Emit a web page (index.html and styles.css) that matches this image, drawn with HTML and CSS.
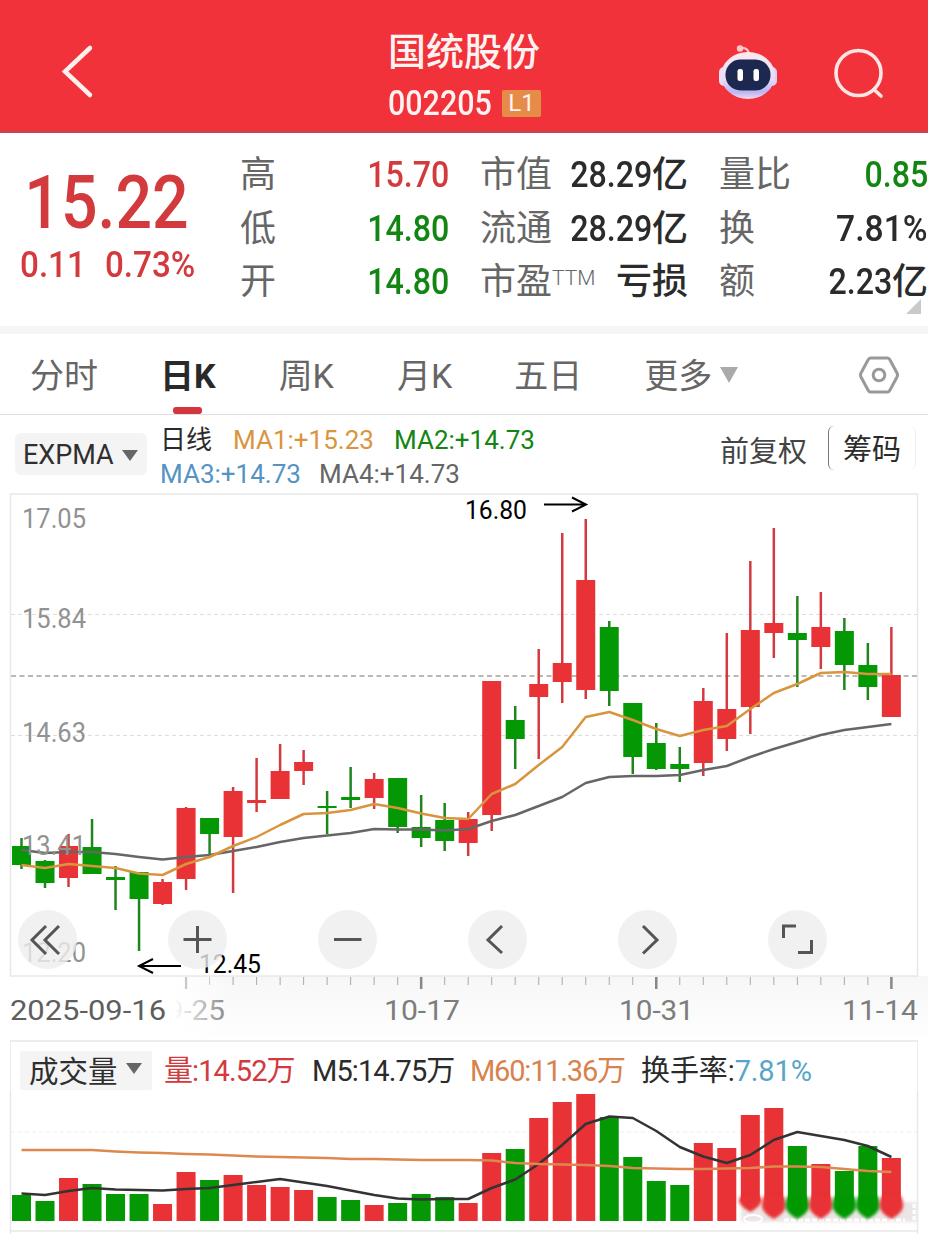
FILE: index.html
```html
<!DOCTYPE html>
<html lang="zh-CN">
<head>
    <meta charset="UTF-8">
    <meta name="viewport" content="width=device-width, initial-scale=1.0">
    <title>国统股份 002205</title>
    <link rel="stylesheet" href="styles.css">
</head>
<body>
    <!-- Header -->
    <header class="header">
        <svg class="back" viewBox="0 0 34 56"><path d="M30 5 L5 28.500 L30 52" fill="none" stroke="#fff0ee" stroke-width="4.500" stroke-linecap="round"/></svg>
        <div class="title">
            <h1 class="name">国统股份</h1>
            <div class="code-row">
                <span class="code">002205</span>
                <span class="level">L1</span>
            </div>
        </div>
        <div class="actions">
            <svg class="robot" viewBox="0 0 60 56">
                <defs>
                    <linearGradient id="shell" x1="0" y1="0" x2="0" y2="1">
                        <stop offset="0" stop-color="#ffe9ee"/>
                        <stop offset="0.6" stop-color="#e4dcfa"/>
                        <stop offset="0.85" stop-color="#b9b5f5"/>
                        <stop offset="1" stop-color="#f8d8e8"/>
                    </linearGradient>
                </defs>
                <path d="M22 4 Q30 3 31 10" fill="none" stroke="#ffc9cc" stroke-width="2"/>
                <circle cx="22" cy="4.500" r="3.200" fill="#ffc9cc"/>
                <rect x="1" y="23" width="10" height="19" rx="5" fill="#f2dcf2"/>
                <rect x="49" y="23" width="10" height="19" rx="5" fill="#dcd0f6"/>
                <ellipse cx="30" cy="31.500" rx="27" ry="23.500" fill="url(#shell)"/>
                <rect x="7.500" y="15.500" width="45" height="31" rx="15" fill="#1d2850"/>
                <rect x="19.500" y="25" width="5.500" height="12" rx="2.200" fill="#fff"/>
                <rect x="35.500" y="25" width="5.500" height="12" rx="2.200" fill="#fff"/>
            </svg>
            <svg class="search" viewBox="0 0 52 52"><g fill="none" stroke="#ffe6e4" stroke-width="3.600" stroke-linecap="round"><circle cx="25.500" cy="25" r="22.500"/><path d="M41 41.500 L48 48"/></g></svg>
        </div>
    </header>

    <!-- Quote -->
    <section class="quote">
        <div class="latest">
            <div class="price red">15.22</div>
            <div class="change red"><span>0.11</span><span>0.73%</span></div>
        </div>
        <dl class="stats stats-a">
            <dt>高</dt><dd class="red"><span class="num">15.70</span></dd>
            <dt>低</dt><dd class="green"><span class="num">14.80</span></dd>
            <dt>开</dt><dd class="green"><span class="num">14.80</span></dd>
        </dl>
        <dl class="stats stats-b">
            <dt>市值</dt><dd><span class="num">28.29</span>亿</dd>
            <dt>流通</dt><dd><span class="num">28.29</span>亿</dd>
            <dt>市盈<sup>TTM</sup></dt><dd>亏损</dd>
        </dl>
        <dl class="stats stats-c">
            <dt>量比</dt><dd class="green"><span class="num">0.85</span></dd>
            <dt>换</dt><dd><span class="num percent">7.81%</span></dd>
            <dt>额</dt><dd><span class="num">2.23</span>亿</dd>
        </dl>
        <i class="expand"></i>
    </section>

    <!-- Period tabs -->
    <nav class="tabs">
        <span class="tab">分时</span>
        <span class="tab active">日K</span>
        <span class="tab">周K</span>
        <span class="tab">月K</span>
        <span class="tab">五日</span>
        <span class="tab more">更多<i class="caret"></i></span>
        <svg class="settings" viewBox="0 0 40 38"><g fill="none" stroke="#999" stroke-width="3"><path d="M11.500 2 H28.500 Q30 2 31 4 L38 17 Q39 19 38 21 L31 34 Q30 36 28.500 36 H11.500 Q10 36 9 34 L2 21 Q1 19 2 17 L9 4 Q10 2 11.500 2 Z"/><circle cx="20" cy="19" r="5.800"/></g></svg>
    </nav>

    <!-- Indicator row -->
    <section class="indicator">
        <div class="picker"><span>EXPMA</span><i class="caret dark"></i></div>
        <div class="averages">
            <span class="day">日线</span>
            <span class="ma orange">MA1:+15.23</span>
            <span class="ma green">MA2:+14.73</span>
            <span class="ma blue">MA3:+14.73</span>
            <span class="ma gray">MA4:+14.73</span>
        </div>
        <span class="adjust">前复权</span>
        <span class="chips">筹码</span>
    </section>

    <!-- Candlestick chart -->
    <section class="kline">
        <svg id="kline" viewBox="0 493 928 547"></svg>
        <div class="tools">
            <span class="tool"><svg viewBox="0 0 59 59"><path d="M41 16 L27 30 L41 44 M28 16 L14 30 L28 44"/></svg></span>
            <span class="tool"><svg viewBox="0 0 59 59"><path d="M29.500 16 V43 M15.500 29.500 H43.500"/></svg></span>
            <span class="tool"><svg viewBox="0 0 59 59"><path d="M16 29.500 H43.500"/></svg></span>
            <span class="tool"><svg viewBox="0 0 59 59"><path d="M34 16 L20 30 L34 43"/></svg></span>
            <span class="tool"><svg viewBox="0 0 59 59"><path d="M25 16 L39 30 L25 43.500"/></svg></span>
            <span class="tool"><svg viewBox="0 0 59 59"><path d="M15.500 28 V16 H28 M43.500 30 V42.500 H30"/></svg></span>
        </div>
    </section>

    <!-- Volume chart -->
    <section class="volume">
        <div class="volume-head">
            <div class="picker small"><span>成交量</span><i class="caret dark"></i></div>
            <span class="vol red">量:14.52万</span>
            <span class="vol">M5:14.75万</span>
            <span class="vol coral">M60:11.36万</span>
            <span class="vol last">换手率:<b>7.81%</b></span>
        </div>
        <svg id="volume" viewBox="0 1091 928 143"></svg>
    </section>

    <script src="chart.js"></script>
</body>
</html>
```
FILE: styles.css
```css
* {
    margin: 0;
    padding: 0;
    box-sizing: border-box;
}

body {
    width: 928px;
    height: 1234px;
    background: #fff;
    color: #2b2b2b;
    font-family: Roboto, "Noto Sans CJK SC", sans-serif;
    overflow: hidden;
}

svg {
    display: block;
}

.red { color: #d23a3d; }
.green { color: #128512; }
.orange { color: #d9953d; }
.blue { color: #5593c4; }
.gray { color: #666; }
.coral { color: #d9824e; }

/* Header */
.header {
    height: 133px;
    background: #f1323a;
    border-bottom: 2px solid #b94a50;
    display: grid;
    grid-template-columns: 1fr 160px 1fr;
    color: #fff3f2;
}

.back {
    width: 34px;
    height: 56px;
    margin: 43px 0 0 60px;
}

.title {
    text-align: center;
    padding-top: 25px;
}

.name {
    font-size: 38px;
    font-weight: 500;
    line-height: 54px;
    white-space: nowrap;
}

.code-row {
    display: flex;
    align-items: center;
    height: 49px;
    padding-left: 4px;
}

.code {
    width: 114px;
    text-align: left;
    font-size: 35px;
    font-weight: 500;
    transform: scaleX(0.87);
    transform-origin: left;
}

.level {
    width: 39px;
    height: 27px;
    border-radius: 2px;
    background: #e58d48;
    font-size: 24px;
    line-height: 27px;
}

.actions {
    display: flex;
    padding-left: 174px;
}

.robot {
    width: 60px;
    height: 56px;
    margin-top: 44px;
}

.search {
    width: 52px;
    height: 52px;
    margin: 48px 0 0 55px;
}

/* Quote */
.quote {
    position: relative;
    height: 193px;
    display: flex;
}

.latest {
    width: 240px;
    padding: 30px 0 0 20px;
}

.price {
    width: 190px;
    font-size: 74px;
    font-weight: 500;
    line-height: 80px;
    padding-left: 5px;
    transform: scaleX(0.87);
    transform-origin: left;
}

.change {
    display: flex;
    gap: 21px;
    font-size: 36.500px;
    font-weight: 500;
    line-height: 44px;
    white-space: nowrap;
    transform: scaleX(0.91);
    transform-origin: left;
}

.stats {
    display: grid;
    grid-template-columns: 88px minmax(0, 1fr);
    grid-template-rows: repeat(3, 53.500px);
    align-content: start;
    padding-top: 16px;
    font-size: 36px;
    line-height: 53px;
    white-space: nowrap;
}

.stats dt {
    color: #666;
}

.stats dd {
    display: flex;
    justify-content: flex-end;
    font-weight: 500;
}

.stats sup {
    font-size: 21px;
    line-height: 0;
    vertical-align: 9px;
    font-weight: 300;
}

.stats-a { width: 209px; }
.stats-b { width: 208px; margin-left: 31px; }
.stats-c { width: 209px; margin-left: 31px; }

.num {
    display: inline-block;
    font-size: 37px;
    line-height: 51px;
    transform: scaleX(0.87);
    transform-origin: right;
}

.percent {
    transform: scaleX(0.91);
}

.expand {
    position: absolute;
    right: 7px;
    bottom: 12px;
    border-left: 15px solid transparent;
    border-bottom: 15px solid #c9c9c9;
}

/* Period tabs */
.tabs {
    height: 89px;
    border-top: 8px solid #f5f5f5;
    border-bottom: 1px solid #e0e0e0;
    display: flex;
    padding-left: 30px;
    color: #666;
    font-size: 34px;
    line-height: 84px;
    white-space: nowrap;
}

.tab {
    margin-right: 63px;
}

.tab:nth-child(1),
.tab:nth-child(4),
.tab:nth-child(5) {
    margin-right: 62px;
}

.active {
    color: #292929;
    font-weight: 700;
    display: flex;
    flex-direction: column;
    align-items: center;
}

.active::after {
    content: "";
    width: 29px;
    height: 7px;
    margin-top: -11px;
    border-radius: 3px;
    background: #d1373d;
}

.caret {
    display: inline-block;
    border: 9px solid transparent;
    border-top: 16px solid #aaa;
    border-bottom: 0;
}

.caret.dark {
    border-width: 11px 8px 0;
    border-top-color: #666;
}

.more {
    width: 95px;
    margin-right: 120px;
}

.more .caret {
    margin-left: 8px;
    vertical-align: 5px;
}

.settings {
    width: 40px;
    height: 38px;
    margin-top: 22px;
}

/* Indicator row */
.indicator {
    height: 78px;
    display: flex;
    padding-left: 15px;
}

.picker {
    width: 132px;
    height: 42px;
    margin-top: 18px;
    padding: 2px 0 0 8px;
    border-radius: 6px;
    background: #f4f4f4;
    display: flex;
    align-items: center;
    gap: 8px;
    font-size: 27px;
    color: #2f2f2f;
}

.averages {
    width: 440px;
    margin: 8px 0 0 13px;
    display: flex;
    flex-wrap: wrap;
    align-content: flex-start;
    column-gap: 20px;
    font-size: 26px;
    line-height: 34px;
}

.ma {
    width: 141px;
    white-space: nowrap;
}

.ma.blue {
    width: 139px;
}

.day {
    width: 53px;
}

.adjust {
    width: 90px;
    margin: 17px 0 0 120px;
    font-size: 29px;
    line-height: 40px;
    color: #444;
}

.chips {
    width: 88px;
    height: 44px;
    margin: 11px 0 0 18px;
    border-left: 1px solid #777;
    border-right: 1px solid #eee;
    border-radius: 6px;
    font-size: 29px;
    line-height: 49px;
    text-align: center;
}

/* Candlestick chart */
.kline {
    position: relative;
    height: 547px;
}

.kline > svg {
    width: 928px;
    height: 547px;
}

.tools {
    position: absolute;
    left: 18px;
    top: 417px;
    display: flex;
    gap: 91px;
}

.tool {
    width: 59px;
    height: 59px;
    border-radius: 50%;
    background: rgba(238, 238, 238, 0.8);
}

.tool path {
    fill: none;
    stroke: #555;
    stroke-width: 3;
}

/* Volume chart */
.volume-head {
    height: 51px;
    margin: 0 10px;
    border: 1px solid #ececec;
    border-top-width: 2px;
    border-bottom: 0;
    display: flex;
    padding-left: 9px;
    font-size: 29px;
    white-space: nowrap;
}

.picker.small {
    height: 39px;
    margin-top: 9px;
    padding: 0 0 4px 9px;
    gap: 8px;
    border-radius: 2px;
    font-size: 29.500px;
}

.vol {
    width: 131px;
    margin-left: 12px;
    line-height: 59px;
    letter-spacing: -0.9px;
}

.vol:nth-child(3) { width: 141px; margin-left: 17px; }
.vol:nth-child(4) { width: 155px; margin-left: 17px; letter-spacing: -1.200px; }
.vol.last { margin-left: 16px; letter-spacing: -0.1px; }

.vol b {
    font-weight: 400;
    color: #58a5c8;
}

.volume > svg {
    width: 928px;
    height: 143px;
}

/* Chart drawing */
.up { fill: #e83235; stroke: #d33a3d; }
.down { fill: #059805; stroke: #1f851f; }
.body { stroke: none; }
.wick { stroke-width: 2.500px; }
.line { fill: none; stroke-width: 2.500px; stroke-linejoin: round; }
.frame { fill: none; stroke: #e8e8e8; stroke-width: 1.500px; }
.grid { stroke: #dedede; stroke-dasharray: 4 3; }
.current { stroke: #aaa096; stroke-width: 1.500px; stroke-dasharray: 5 3.500; }
.axis { font-size: 27px; fill: #929292; }
.date { font-size: 28px; fill: #7d7d7d; }
.date.first { fill: #5e5e5e; }
.mark { font-size: 26px; fill: #000; }
.arrow { fill: none; stroke: #000; stroke-width: 2px; }
.tick { stroke: #aaa; stroke-width: 1px; }
.tick.major { stroke: #888; stroke-width: 2.500px; }
```
FILE: chart.js
```javascript
const START = 21.5;
const STEP = 23.51;
const BAR = 19;

// direction, body top, body bottom, high, low, volume top
const days = [
    ['down', 846, 865, 838, 869, 1195],
    ['down', 861, 883, 860, 888, 1201],
    ['up', 846, 878, 834, 887, 1178],
    ['down', 847, 874, 819, 874, 1184],
    ['down', 877, 880, 866, 910, 1194],
    ['down', 872, 899, 872, 951, 1194],
    ['up', 882, 904, 879, 905, 1204],
    ['up', 808, 879, 807, 890, 1172],
    ['down', 818, 834, 818, 855, 1180],
    ['up', 791, 837, 787, 893, 1175],
    ['up', 800, 803, 758, 812, 1185],
    ['up', 771, 799, 744, 799, 1187],
    ['up', 762, 771, 750, 785, 1190],
    ['down', 806, 808, 791, 834, 1197],
    ['down', 797, 800, 767, 808, 1200],
    ['up', 779, 798, 773, 809, 1205],
    ['down', 778, 827, 778, 833, 1203],
    ['down', 827, 838, 795, 847, 1194],
    ['down', 820, 841, 803, 851, 1197],
    ['up', 819, 843, 812, 856, 1203],
    ['up', 681, 815, 681, 831, 1153],
    ['down', 720, 739, 706, 769, 1149],
    ['up', 684, 697, 649, 759, 1118],
    ['up', 663, 682, 533, 703, 1102],
    ['up', 580, 690, 519, 699, 1094],
    ['down', 627, 691, 621, 706, 1117],
    ['down', 703, 757, 703, 774, 1157],
    ['down', 743, 769, 723, 770, 1181],
    ['down', 764, 769, 747, 782, 1185],
    ['up', 701, 763, 688, 776, 1143],
    ['up', 709, 739, 633, 751, 1148],
    ['up', 630, 707, 561, 734, 1115],
    ['up', 623, 633, 528, 658, 1108],
    ['down', 633, 640, 596, 687, 1146],
    ['up', 627, 647, 592, 669, 1164],
    ['down', 631, 665, 618, 690, 1171],
    ['down', 665, 687, 643, 700, 1146],
    ['up', 675, 717, 627, 717, 1158]
];

const fast = [865, 868, 864, 866, 868, 873.5, 875, 864, 857, 846, 837, 825, 814, 813, 810, 804, 808, 813.5, 818, 819, 794, 784, 765, 747, 717, 712, 720, 729, 736, 730, 726, 709, 693, 684, 673, 672, 674, 674];
const slow = [850, 853, 852, 852, 854, 857, 859.5, 857, 855, 851, 847, 842, 838, 835.5, 833, 829, 829.5, 829.5, 830.5, 829, 821, 815, 806, 797, 783, 777, 776, 776, 775, 770, 766, 757, 749, 742, 735, 730, 727, 724];
const m5 = [1193.5, 1195, 1191, 1188, 1189.5, 1190, 1190.5, 1189, 1188, 1185, 1182, 1179, 1182.5, 1186, 1190.5, 1195, 1198.5, 1199.5, 1199, 1199, 1188, 1179.5, 1164, 1145, 1124, 1116.5, 1118, 1131, 1147, 1156.5, 1163, 1155, 1140, 1132, 1136, 1140, 1146, 1157];
const m60 = [1150, 1150, 1150, 1150, 1151.5, 1152.5, 1153, 1154, 1154.5, 1155.5, 1156.5, 1157, 1157.5, 1158, 1159, 1159, 1159.5, 1160, 1160, 1160, 1160.5, 1163, 1164, 1164.5, 1165, 1166, 1168, 1168.5, 1169, 1169, 1168.5, 1168, 1166.5, 1166.5, 1167, 1169, 1171, 1172];

const x = i => START + STEP * i;

function line(values, color) {
    const points = values.map((y, i) => `${x(i).toFixed(1)},${y}`).join(' ');
    return `<polyline class="line" stroke="${color}" points="${points}"/>`;
}

function text(cls, value, left, baseline, width) {
    return `<text class="${cls}" x="${left}" y="${baseline}" textLength="${width}" lengthAdjust="spacingAndGlyphs">${value}</text>`;
}

function drawKline() {
    let out = `<defs>
        <linearGradient id="band" x1="0" y1="0" x2="0" y2="1"><stop offset="0" stop-color="#f7f7f7"/><stop offset="1" stop-color="#fefefe"/></linearGradient>
        <linearGradient id="fade"><stop offset="0" stop-color="#fff"/><stop offset="0.75" stop-color="#fff"/><stop offset="1" stop-color="#fff" stop-opacity="0"/></linearGradient>
    </defs>
    <rect x="0" y="976" width="928" height="62" fill="url(#band)"/>
    <rect x="10.500" y="494" width="907" height="482" fill="#fff"/>
    <path class="grid" d="M11 614.500 H917 M11 735.500 H917"/>
    <path class="current" d="M11 676 H917"/>`;

    days.forEach(([dir, top, bottom, high, low], i) => {
        out += `<path class="wick ${dir}" d="M${x(i)} ${high} V${low}"/>`;
        out += `<rect class="body ${dir}" x="${x(i) - BAR / 2}" y="${top}" width="${BAR}" height="${bottom - top}"/>`;
    });

    out += line(slow, '#666') + line(fast, '#d9953d');

    [['17.05', 528], ['15.84', 628], ['14.63', 742], ['13.41', 855], ['12.20', 962]].forEach(([label, y]) => {
        out += text('axis', label, 22, y, 64);
    });

    out += text('mark', '16.80', 465, 519, 62);
    out += '<path class="arrow" d="M544 504.500 H585 M572 497.500 L586 504.500 L572 511.500"/>';
    out += text('mark', '12.45', 199, 973, 62);
    out += '<path class="arrow" d="M181 966 H140 M153 959 L139 966 L153 973"/>';

    // one tick per day, a longer one under each date
    for (let i = 7; i < days.length; i++) {
        const major = (i - 7) % 10 === 0;
        out += `<path class="tick${major ? ' major' : ''}" d="M${x(i)} 977 V${major ? 989 : 985}"/>`;
    }

    // the first date sits on a white fade over the one behind it
    out += text('date', '09-25', 150, 1020, 75);
    out += '<rect x="0" y="976" width="232" height="64" fill="url(#fade)"/>';
    out += '<rect class="frame" x="10.500" y="494" width="907" height="482"/>';
    out += '<path class="tick" d="M186 977 V989"/>';
    out += text('date first', '2025-09-16', 10, 1020, 156);
    out += text('date', '10-17', 384, 1020, 76);
    out += text('date', '10-31', 619, 1020, 75);
    out += text('date', '11-14', 842, 1020, 76);
    document.getElementById('kline').innerHTML = out;
}

function drawVolume() {
    let out = `<defs>
        <filter id="soft" x="-20%" y="-50%" width="140%" height="200%"><feGaussianBlur stdDeviation="1.500"/></filter>
    </defs>
    <path class="frame" d="M10.500 1091 V1234 M917.500 1091 V1234 M10.500 1231 H917.500"/>
    <path class="grid" d="M11 1132 H917" opacity="0.5"/>
    <rect x="741" y="1202" width="176" height="20" fill="#ebe6e6" filter="url(#soft)"/>
    <ellipse cx="753" cy="1219" rx="9" ry="4" fill="none" stroke="#fff" stroke-width="2"/>
    <path d="M784 1220 H905" stroke="#fff" stroke-width="3" stroke-dasharray="5 2"/>
    <path d="M914 1204 V1222" stroke="#fff" stroke-width="3" stroke-dasharray="4 2"/>`;

    days.forEach(([dir, , , , , top], i) => {
        const left = x(i) - BAR / 2;
        if (i < 31) {
            out += `<rect class="body ${dir}" x="${left}" y="${top}" width="${BAR}" height="${1221 - top}"/>`;
            return;
        }
        // the last bars melt into the haze at the foot of the chart
        const tip = i === 31 ? 1212 : 1219;
        out += `<rect class="body ${dir}" x="${left}" y="${top}" width="${BAR}" height="${1201 - top}"/>`;
        out += `<path class="body ${dir}" filter="url(#soft)" d="M${left} 1196 h${BAR} q3 6 2 ${tip - 1207} q-2 6 -11.500 11 q-9.500 -5 -11.500 -11 q-1 -${tip - 1213} 2 -${tip - 1207} Z"/>`;
    });

    out += line(m5, '#333') + line(m60, '#dd8850');
    document.getElementById('volume').innerHTML = out;
}

drawKline();
drawVolume();
```
